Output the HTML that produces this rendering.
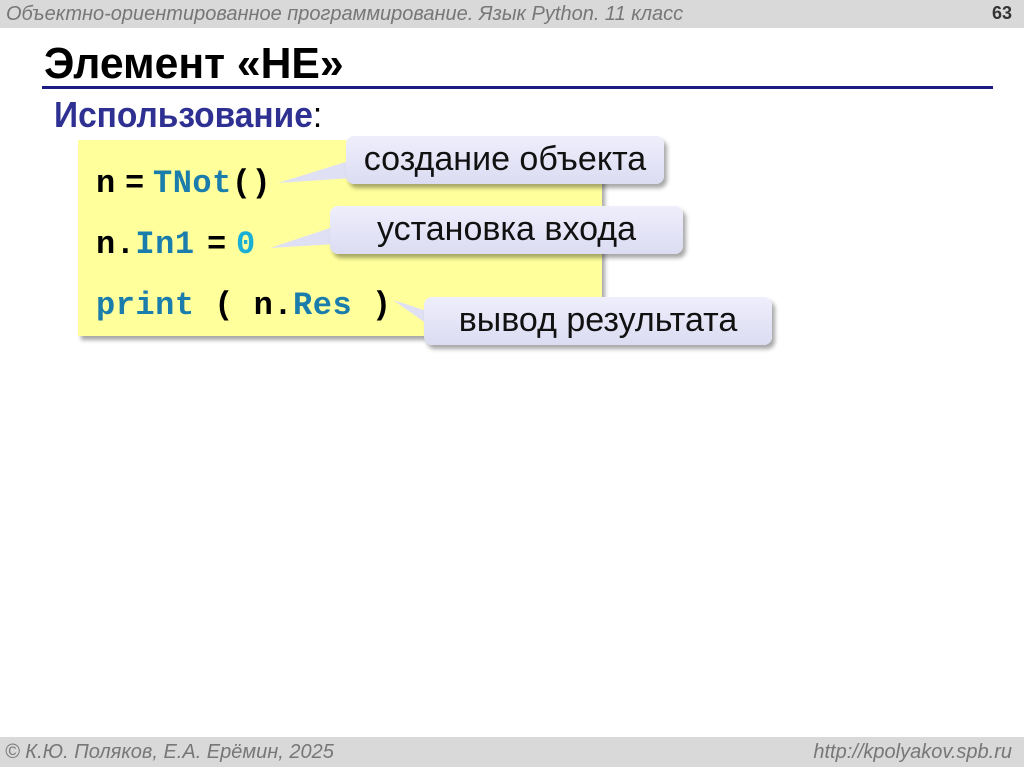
<!DOCTYPE html>
<html><head><meta charset="utf-8"><style>
body{margin:0;width:1024px;height:767px;background:#fff;position:relative;overflow:hidden;font-family:"Liberation Sans",sans-serif}
.top{position:absolute;left:0;top:0;width:1024px;height:28px;background:#d9d9d9}
.top span{position:absolute;left:6px;top:3px;font-style:italic;font-size:20px;color:#777;white-space:nowrap}
.num{position:absolute;right:12px;top:3px;font-weight:bold;font-size:18px;color:#333}
h1{position:absolute;left:44px;top:42px;margin:0;font-size:44px;line-height:1;font-weight:bold;color:#000;transform:scaleX(.97);transform-origin:left;white-space:nowrap}
.line{position:absolute;left:42px;top:86px;width:951px;height:3px;background:#1a1a80}
.use{position:absolute;left:54px;top:97px;font-size:36px;line-height:1;font-weight:bold;color:#2e3192;transform:scaleX(.93);transform-origin:left;white-space:nowrap}
.use b{color:#000;font-weight:normal}
.code{position:absolute;left:78px;top:140px;width:524px;height:196px;background:#ffff9c;box-shadow:3px 4px 4px rgba(0,0,0,.35)}
.c{position:absolute;font-family:"Liberation Mono",monospace;font-weight:bold;font-size:32px;letter-spacing:0.5px;color:#000;white-space:pre;line-height:1}
.k{color:#1b7dab}.z{color:#1ab0d6}
.cl{position:absolute;background:linear-gradient(#eeeefc,#dcdcf2);border-radius:8px;box-shadow:3px 4px 4px rgba(0,0,0,.35);font-size:34px;color:#111;text-align:center;line-height:46px;white-space:nowrap}
svg{position:absolute;left:0;top:0}
.bot{position:absolute;left:0;top:737px;width:1024px;height:30px;background:#d9d9d9;font-style:italic;font-size:20px;color:#777}
.bot .l{position:absolute;left:5px;top:4px}
.bot .r{position:absolute;right:12px;top:4px}
</style></head><body>
<div class="top"><span>Объектно-ориентированное программирование. Язык Python. 11 класс</span><div class="num">63</div></div>
<h1>Элемент «НЕ»</h1>
<div class="line"></div>
<div class="use">Использование<b>:</b></div>
<div class="code"></div>
<div class="c" style="top:168px;left:96px">n</div>
<div class="c" style="top:168px;left:125px">=</div>
<div class="c" style="top:168px;left:153px"><span class="k">TNot</span>()</div>
<div class="c" style="top:229px;left:96px">n.<span class="k">In1</span></div>
<div class="c" style="top:229px;left:207px">=</div>
<div class="c" style="top:229px;left:236px"><span class="z">0</span></div>
<div class="c" style="top:290px;left:96px"><span class="k">print</span> ( n.<span class="k">Res</span> )</div>
<svg width="1024" height="767"><g fill="#e0e0f4">
<polygon points="278,183 352,160 352,178"/>
<polygon points="270,248 336,226 336,244"/>
<polygon points="393,300 430,312 430,326"/></g></svg>
<div class="cl" style="left:346px;top:136px;width:318px;height:48px">создание объекта</div>
<div class="cl" style="left:330px;top:206px;width:353px;height:48px">установка входа</div>
<div class="cl" style="left:424px;top:297px;width:348px;height:48px">вывод результата</div>
<div class="bot"><span class="l">© К.Ю. Поляков, Е.А. Ерёмин, 2025</span><span class="r">http://kpolyakov.spb.ru</span></div>
</body></html>
